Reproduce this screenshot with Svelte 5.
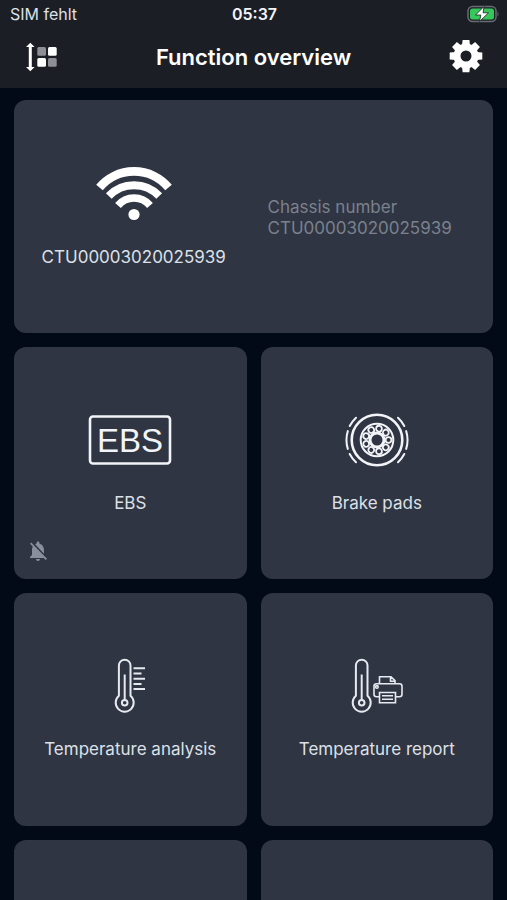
<script lang="ts">
  interface Tile {
    id: string;
    label: string;
    icon: 'ebs' | 'brake' | 'analysis' | 'report' | null;
    muted?: boolean;
  }

  const chassisNumber = 'CTU00003020025939';

  const tiles: Tile[] = [
    { id: 'ebs', label: 'EBS', icon: 'ebs', muted: true },
    { id: 'brake-pads', label: 'Brake pads', icon: 'brake' },
    { id: 'temperature-analysis', label: 'Temperature analysis', icon: 'analysis' },
    { id: 'temperature-report', label: 'Temperature report', icon: 'report' },
    { id: 'more-1', label: '', icon: null },
    { id: 'more-2', label: '', icon: null },
  ];

  const teeth = [0, 45, 90, 135, 180, 225, 270, 315];
  const bolts = [0, 40, 80, 120, 160, 200, 240, 280, 320];
</script>

{#snippet thermometer()}
  <path d="M4.9 37.8V7.5a5.8 5.8 0 0 1 11.6 0v30.3a9 9 0 1 1-11.6 0z" />
  <path d="M10.7 16.5v25" />
  <circle cx="10.7" cy="44.7" r="2.8" />
{/snippet}

<div class="screen">
  <header>
    <div class="status-bar">
      <span class="carrier">SIM fehlt</span>
      <span class="time">05:37</span>
      <svg class="battery" width="32" height="18" viewBox="0 0 32 18" aria-label="Charging">
        <rect x="1" y="1.5" width="28" height="15" rx="4.5" fill="none" stroke="#686b72" stroke-width="1.5" />
        <path d="M30.5 6.5c1.3.8 1.3 4.2 0 5z" fill="#686b72" />
        <rect x="3" y="3.5" width="24" height="11" rx="2.5" fill="#35c759" />
        <path d="M17 1.5 8.5 10h5.3l-1.3 6.5 9-8.7h-5.4z" fill="#fff" stroke="#1c1e26" stroke-width="0.8" />
      </svg>
    </div>

    <div class="title-bar">
      <button class="icon-btn" aria-label="Sort tiles">
        <svg width="32" height="30" viewBox="0 0 32 30">
          <path d="M4.3 4v22" stroke="#fff" stroke-width="3" />
          <path d="M4.3.8 8.6 5H0zM4.3 29.2 8.600 25H0z" fill="#fff" />
          <rect x="11.3" y="5" width="8.7" height="8.7" rx="1.5" fill="#8e8f94" />
          <rect x="22" y="5" width="8.7" height="8.7" rx="1.5" fill="#fff" />
          <rect x="11.3" y="16" width="8.7" height="8.7" rx="1.5" fill="#fff" />
          <rect x="22" y="16" width="8.7" height="8.7" rx="1.5" fill="#8e8f94" />
        </svg>
      </button>
      <h1>Function overview</h1>
      <button class="icon-btn" aria-label="Settings">
        <svg width="34" height="34" viewBox="-17 -16 34 34" fill="#fff">
          {#each teeth as angle}
            <path d="M-4-10-3.4-16.3H3.4L4-10z" transform="rotate({angle})" />
          {/each}
          <circle r="9" fill="none" stroke="#fff" stroke-width="7" />
        </svg>
      </button>
    </div>
  </header>

  <main>
    <button class="card wide">
      <span class="content">
        <span class="icon">
          <svg width="76" height="56" viewBox="0 0 76 56" fill="none" stroke="#fff">
            <path d="M3.5 21.5A45 45 0 0 1 72.5 21.5" stroke-width="8.6" />
            <path d="M12.8 30A35 35 0 0 1 63.2 30" stroke-width="8" />
            <path d="M22 39.5A21 21 0 0 1 54 39.5" stroke-width="7.5" />
            <circle cx="38" cy="48.5" r="5.6" fill="#fff" stroke="none" />
          </svg>
        </span>
        <span class="label">{chassisNumber}</span>
      </span>
      <span class="chassis">
        <span>Chassis number</span>
        <span>{chassisNumber}</span>
      </span>
    </button>

    {#each tiles as tile (tile.id)}
      <button class="card" aria-label={tile.label || 'More'}>
        <span class="content">
          <span class="icon">
            {#if tile.icon === 'ebs'}
              <svg width="84" height="50" viewBox="0 0 84 50">
                <rect x="2" y="1.5" width="80" height="47" rx="3" fill="none" stroke="#f2f4f8" stroke-width="2.6" />
                <text class="ebs-text" x="42" y="37" text-anchor="middle">EBS</text>
              </svg>
            {:else if tile.icon === 'brake'}
              <svg width="64" height="56" viewBox="-32 -28 64 56" fill="none" stroke="#f2f4f8" stroke-width="2">
                <circle r="25.3" stroke-width="2.6" />
                <circle r="16.3" />
                <circle r="7" stroke-width="3" />
                {#each bolts as angle}
                  <circle cx="11.5" r="2.9" stroke-width="1.8" transform="rotate({angle})" />
                {/each}
                {#each [0, 180] as side}
                  <g transform="rotate({side})" stroke-linecap="round">
                    <path d="M29.2-8.9A30.5 30.5 0 0 1 29.2 8.9" />
                    <path d="M21-22.3A30.7 30.7 0 0 1 27.3-14" />
                    <path d="M27.3 14A30.7 30.7 0 0 1 21 22.3" />
                  </g>
                {/each}
              </svg>
            {:else if tile.icon === 'analysis'}
              <svg width="32" height="56" viewBox="0 0 32 56" fill="none" stroke="#e6e9ef" stroke-width="2">
                {@render thermometer()}
                <path d="M19.5 10.3H31M19.5 15.5h8M19.5 20.7H31M19.5 25.9h8M19.5 31H31" />
              </svg>
            {:else if tile.icon === 'report'}
              <svg width="52" height="56" viewBox="0 0 52 56" fill="none" stroke="#e6e9ef" stroke-width="2">
                {@render thermometer()}
                <g stroke-width="1.6">
                  <path d="M28.5 25.5V18.7H40l4 4v2.8M39.5 18.7v4.5H44" />
                  <path d="M28.5 38.7h-3a2.5 2.5 0 0 1-2.5-2.5v-8a2.5 2.5 0 0 1 2.5-2.5h23a2.5 2.5 0 0 1 2.5 2.5v8a2.5 2.5 0 0 1-2.5 2.5h-4" />
                  <path d="M28.5 34.5h16v10.2h-16zM31 37.8h11M31 41.2h11" />
                  <circle cx="25.9" cy="28.9" r="1.3" />
                </g>
              </svg>
            {/if}
          </span>
          <span class="label">{tile.label}</span>
        </span>
        {#if tile.muted}
          <svg class="bell" width="24" height="24" viewBox="0 0 24 24" fill="#8a909b">
            <path d="M20 18.69L7.84 6.14 5.27 3.49 4 4.76l2.8 2.8v.01c-.52.99-.8 2.16-.8 3.42v5l-2 2v1h13.73l2 2L21 19.73l-1-1.04zM12 22c1.11 0 2-.89 2-2h-4c0 1.11.89 2 2 2zm6-7.32V11c0-3.08-1.64-5.64-4.5-6.32V4c0-.83-.67-1.5-1.5-1.5s-1.5.67-1.5 1.5v.68c-.15.03-.29.08-.42.12-.1.03-.2.07-.3.11h-.01c-.01 0-.01 0-.02.01-.23.09-.46.2-.68.31 0 0-.01 0-.01.01L18 14.68z" />
          </svg>
        {/if}
      </button>
    {/each}
  </main>
</div>

<style>
  :global(body) {
    background-color: #020a18;
  }

  .screen {
    height: 100vh;
    display: flex;
    flex-direction: column;
    background-color: #020a18;
    color: #dde0e7;
    font-family: Inter, Roboto, sans-serif;
  }

  header {
    flex-shrink: 0;
    background-color: #1c1e26;
  }

  .status-bar {
    display: grid;
    grid-template-columns: 1fr auto 1fr;
    align-items: center;
    height: 28px;
    padding: 0 8px 0 10px;
    font-size: 16px;
    line-height: 20px;
  }

  .time {
    color: #f2f4f8;
    font-weight: 600;
  }

  .battery {
    justify-self: end;
  }

  .title-bar {
    display: flex;
    align-items: center;
    justify-content: space-between;
    height: 60px;
    padding: 0 24px 2px 26px;
    box-sizing: border-box;
  }

  h1 {
    margin: 0;
    color: #fff;
    font-size: 22px;
    font-weight: 600;
    line-height: 28px;
  }

  .icon-btn {
    display: flex;
    padding: 0;
    border: none;
    background: none;
    cursor: pointer;
  }

  main {
    flex: 1;
    min-height: 0;
    display: grid;
    grid-template-columns: 1fr 1fr;
    align-content: start;
    gap: 14px;
    padding: 12px 14px;
    overflow-y: auto;
    scrollbar-width: none;
  }

  .card {
    position: relative;
    display: grid;
    align-items: center;
    aspect-ratio: 1;
    min-width: 0;
    padding: 0;
    border: none;
    border-radius: 12px;
    background-color: #2f3542;
    color: inherit;
    font-family: inherit;
    font-size: 17px;
    line-height: 20px;
    cursor: pointer;
  }

  .wide {
    grid-column: 1 / -1;
    grid-template-columns: 1fr 1fr;
    aspect-ratio: 206 / 100;
    padding-top: 2px;
  }

  .content {
    display: flex;
    flex-direction: column;
    align-items: center;
    gap: 21px;
    padding-bottom: 5px;
  }

  .icon {
    display: flex;
    align-items: center;
    justify-content: center;
    height: 64px;
  }

  .ebs-text {
    fill: #f2f4f8;
    font-family: "Liberation Sans", Arial, sans-serif;
    font-size: 33px;
  }

  .chassis {
    display: flex;
    flex-direction: column;
    padding: 2px 0 0 14px;
    color: #7b818d;
    line-height: 21px;
    text-align: left;
  }

  .bell {
    position: absolute;
    left: 12px;
    bottom: 16px;
  }
</style>
